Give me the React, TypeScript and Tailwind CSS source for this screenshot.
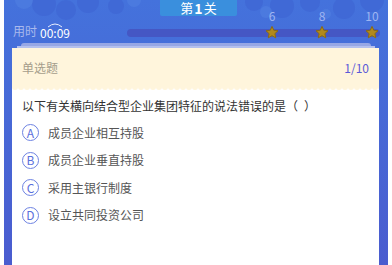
const font = { fontFamily: '"Noto Sans CJK SC", "Noto Sans", sans-serif' };

const options = [
  { key: "A", text: "成员企业相互持股" },
  { key: "B", text: "成员企业垂直持股" },
  { key: "C", text: "采用主银行制度" },
  { key: "D", text: "设立共同投资公司" },
];

const marks = [
  { label: "6", left: 145 },
  { label: "8", left: 195 },
  { label: "10", left: 245 },
];

function Star() {
  return (
    <svg width="15" height="15" viewBox="0 0 24 24">
      <path
        d="M12 2.2l2.9 6.2 6.7.8-5 4.6 1.4 6.7L12 17.1l-6 3.4 1.4-6.7-5-4.6 6.7-.8z"
        fill="#b18a1c"
        stroke="#8a6a14"
        strokeWidth="1.6"
        strokeLinejoin="round"
      />
    </svg>
  );
}

function Clouds() {
  return (
    <svg className="absolute left-0 top-0 pointer-events-none" width="384" height="30">
      <g fill="#3f66d4" opacity="0.7">
        <circle cx="40" cy="4" r="12" />
        <circle cx="62" cy="10" r="10" />
        <circle cx="84" cy="2" r="11" />
        <circle cx="112" cy="6" r="8" />
        <circle cx="250" cy="2" r="9" />
        <circle cx="278" cy="6" r="12" />
        <circle cx="306" cy="2" r="10" />
        <circle cx="340" cy="8" r="11" />
        <circle cx="368" cy="0" r="12" />
      </g>
      <g fill="#5180e2" opacity="0.6">
        <circle cx="20" cy="0" r="9" />
        <circle cx="130" cy="0" r="7" />
        <circle cx="262" cy="12" r="6" />
        <circle cx="322" cy="14" r="5" />
      </g>
    </svg>
  );
}

function Header() {
  return (
    <div className="relative h-[43px] flex flex-col">
      <Clouds />
      <div className="relative h-[16px] flex">
        <div className="ml-[156px] w-[77px] h-[16px] bg-[#3a8fdd] rounded-b-[2px] flex items-center justify-center text-white text-[13px] leading-[16px]">
          <span>第</span>
          <span className="font-bold text-[14px] mx-[1px]">1</span>
          <span>关</span>
        </div>
      </div>
      <div className="relative flex items-start h-[27px]">
        <span className="ml-[9px] mt-[8px] text-[12px] leading-[14px] text-[#a9b9ec]">用时</span>
        <div className="relative ml-[3px] mt-[6px] flex flex-col items-center">
          <svg width="18" height="6" viewBox="0 0 18 6">
            <path d="M2 5 Q9 -1 16 5" fill="none" stroke="#e8eeff" strokeWidth="1" />
          </svg>
          <span className="text-white text-[12px] leading-[12px] -mt-[1px]">00:09</span>
        </div>
        <div className="relative ml-auto mr-[8px] mt-[13px] w-[253px] h-[8px] rounded-full bg-[#4557c4]">
          {marks.map((m) => (
            <div
              key={m.label}
              className="absolute top-[-19px] flex flex-col items-center -translate-x-1/2"
              style={{ left: m.left }}
            >
              <span className="text-[12px] leading-[12px] text-[#9fb5f1]">{m.label}</span>
              <div className="mt-[3px]">
                <Star />
              </div>
            </div>
          ))}
        </div>
      </div>
    </div>
  );
}

function Scallops() {
  return (
    <svg width="367" height="4" className="block">
      <defs>
        <pattern id="sc" width="6" height="4" patternUnits="userSpaceOnUse">
          <circle cx="3" cy="0" r="3" fill="#fff5dc" />
        </pattern>
      </defs>
      <rect width="367" height="4" fill="url(#sc)" />
    </svg>
  );
}

export default function App() {
  return (
    <div className="w-[392px] h-[265px] bg-white px-[4px] overflow-hidden" style={font}>
      <div className="h-full flex flex-col bg-gradient-to-b from-[#4472dc] to-[#4a5ccf]">
        <Header />
        <div className="ml-[17px] w-[350px] h-[3px] rounded-t-[3px] bg-[#97a7e5]" />
        <div className="ml-[13px] w-[358px] h-[2px] bg-[#b4c0ee]" />
        <div className="ml-[8px] w-[367px] flex-1 bg-white flex flex-col">
          <div className="bg-[#fff5dc] h-[39px] flex items-center justify-between px-[10px] text-[12px]">
            <span className="text-[#a59d8b]">单选题</span>
            <span className="text-[#5a5ad8]">1/10</span>
          </div>
          <Scallops />
          <div className="px-[10px] pt-[7px]">
            <p className="text-[12px] leading-[16px] text-[#333333]">
              以下有关横向结合型企业集团特征的说法错误的是（<span className="inline-block w-[6px]" />）
            </p>
            <div className="mt-[10px] flex flex-col gap-[10.5px]">
              {options.map((o) => (
                <div key={o.key} className="flex items-center gap-[9px]">
                  <span className="w-[17px] h-[17px] rounded-full border border-[#6d82e2] text-[#5a6fdc] text-[12px] leading-none flex items-center justify-center">
                    {o.key}
                  </span>
                  <span className="text-[12px] leading-[16px] text-[#555555]">{o.text}</span>
                </div>
              ))}
            </div>
          </div>
        </div>
      </div>
    </div>
  );
}
